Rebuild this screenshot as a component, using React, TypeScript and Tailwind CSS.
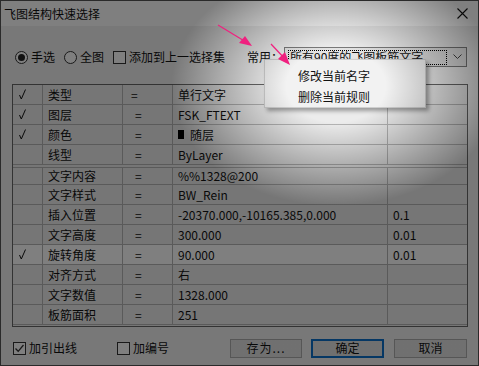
import React from "react";

interface Row {
  check: boolean;
  name: string;
  value: React.ReactNode;
  tol: string;
  active?: boolean;
  eqShift?: boolean;
}

const rows: Row[] = [
  { check: true, name: "类型", value: "单行文字", tol: "", eqShift: true },
  { check: true, name: "图层", value: "FSK_FTEXT", tol: "" },
  {
    check: true,
    name: "颜色",
    value: (
      <span className="flex items-center">
        <span className="inline-block w-[6px] h-[9px] bg-black mr-[6px]" />
        随层
      </span>
    ),
    tol: "",
  },
  { check: false, name: "线型", value: "ByLayer", tol: "" },
  { check: false, name: "文字内容", value: "%%1328@200", tol: "" },
  { check: false, name: "文字样式", value: "BW_Rein", tol: "" },
  { check: false, name: "插入位置", value: "-20370.000,-10165.385,0.000", tol: "0.1" },
  { check: false, name: "文字高度", value: "300.000", tol: "0.01" },
  { check: true, name: "旋转角度", value: "90.000", tol: "0.01", active: true },
  { check: false, name: "对齐方式", value: "右", tol: "" },
  { check: false, name: "文字数值", value: "1328.000", tol: "" },
  { check: false, name: "板筋面积", value: "251", tol: "" },
];

const Radio = ({ on }: { on: boolean }) => (
  <span className="shrink-0 w-[13px] h-[13px] rounded-full border border-[#333] bg-white flex items-center justify-center">
    {on && <span className="w-[7px] h-[7px] rounded-full bg-[#222]" />}
  </span>
);

const Check = ({ on }: { on: boolean }) => (
  <span className="shrink-0 w-[13px] h-[13px] border border-[#333] bg-white flex items-center justify-center">
    {on && (
      <svg width="11" height="11" viewBox="0 0 11 11">
        <path d="M1.5 5.5 L4.2 8.3 L9.5 2" fill="none" stroke="#333" strokeWidth="1.3" />
      </svg>
    )}
  </span>
);

const Tick = () => (
  <svg width="7" height="11" viewBox="0 0 7 11">
    <path d="M0.5 6 L2.3 10 L6.5 0.5" fill="none" stroke="#111" strokeWidth="1" />
  </svg>
);

const App: React.FC = () => {
  return (
    <div className="relative w-[479px] h-[366px] overflow-hidden whitespace-nowrap bg-[#f0f0f0] border border-[#2a2a2a] font-['Noto_Sans_CJK_SC','Microsoft_YaHei',sans-serif] text-[12px] leading-[14px] text-[#111]">
      {/* title bar */}
      <div className="h-[25px] bg-white flex items-center justify-between pl-[3px] pr-[10px]">
        <span>飞图结构快速选择</span>
        <svg width="11" height="11" viewBox="0 0 11 11">
          <path d="M0.5 0.5 L10.5 10.5 M10.5 0.5 L0.5 10.5" stroke="#111" strokeWidth="1.1" />
        </svg>
      </div>

      <div className="px-[11px]">
        {/* options row */}
        <div className="mt-[21px] h-[20px] flex items-center">
          <div className="flex items-center ml-[3px] shrink-0">
            <Radio on />
            <span className="ml-[3px]">手选</span>
          </div>
          <div className="flex items-center ml-[9px] shrink-0">
            <Radio on={false} />
            <span className="ml-[3px]">全图</span>
          </div>
          <div className="flex items-center ml-[9px] shrink-0">
            <Check on={false} />
            <span className="ml-[3px]">添加到上一选择集</span>
          </div>
          <span className="ml-[22px] shrink-0">常用：</span>
          <div className="ml-auto shrink-0 w-[183px] h-[20px] border border-[#7a7a7a] bg-[#e5e5e5] flex items-center pl-[3px] pr-[4px]">
            <div className="flex-1 h-[15px] border border-dotted border-black flex items-center pl-[1px] overflow-hidden">
              所有90度的飞图板筋文字
            </div>
            <svg className="ml-[6px]" width="9" height="6" viewBox="0 0 9 6">
              <path d="M0.5 0.5 L4.5 4.5 L8.5 0.5" fill="none" stroke="#444" strokeWidth="1" />
            </svg>
          </div>
        </div>

        {/* table */}
        <div className="mt-[17px] w-[456px] h-[243px] border border-[#666] bg-[#ececec] overflow-hidden">
          {rows.map((r, i) => (
            <div
              key={r.name}
              className={`flex h-[20px] border-b border-[#b4b4b4] ${r.active ? "bg-white" : ""} ${i === 4 ? "border-t-[2px] border-t-[#ececec] shadow-[inset_0_1px_0_#b4b4b4]" : ""}`}
            >
              <div className="w-[30px] shrink-0 border-r border-[#b4b4b4] flex items-center pl-[6px]">{r.check ? <Tick /> : null}</div>
              <div className="w-[80px] shrink-0 border-r border-[#b4b4b4] flex items-center pl-[5px]">{r.name}</div>
              <div className={`w-[50px] shrink-0 border-r border-[#b4b4b4] flex items-center ${r.eqShift ? "pl-[8px]" : "pl-[12px]"}`}>=</div>
              <div className="w-[215px] shrink-0 border-r border-[#b4b4b4] flex items-center pl-[5px]">{r.value}</div>
              <div className="flex-1 flex items-center pl-[5px]">{r.tol}</div>
            </div>
          ))}
        </div>

        {/* bottom row */}
        <div className="mt-[11px] h-[20px] flex items-center">
          <div className="flex items-center ml-[1px] shrink-0">
            <Check on />
            <span className="ml-[3px]">加引出线</span>
          </div>
          <div className="flex items-center ml-[40px] shrink-0">
            <Check on={false} />
            <span className="ml-[3px]">加编号</span>
          </div>
          <button className="ml-auto shrink-0 w-[72px] h-[19px] border border-[#adadad] bg-[#e1e1e1] flex items-center justify-center tracking-[1px]">
            存为...
          </button>
          <button className="ml-[9px] shrink-0 w-[73px] h-[19px] border-2 border-[#0a6ec8] bg-[#e1e1e1] flex items-center justify-center">
            确定
          </button>
          <button className="ml-[10px] shrink-0 w-[73px] h-[19px] border border-[#adadad] bg-[#e1e1e1] flex items-center justify-center">
            取消
          </button>
        </div>
      </div>

      {/* context menu */}
      <div className="absolute left-[263px] top-[58px] w-[162px] h-[49px] bg-[#f2f2f2] border border-[#cfcfcf] shadow-[3px_3px_4px_rgba(0,0,0,0.35)] flex flex-col pt-[6px]">
        <div className="h-[20px] flex items-center pl-[33px]">修改当前名字</div>
        <div className="h-[20px] flex items-center pl-[33px] mt-[2px]">删除当前规则</div>
      </div>

      {/* spotlight overlay */}
      <div className="absolute inset-0 pointer-events-none bg-[radial-gradient(ellipse_165px_120px_at_335px_85px,rgba(0,0,0,0)_0%,rgba(0,0,0,0)_30%,rgba(0,0,0,0.5)_100%)]" />

      {/* arrows */}
      <svg className="absolute inset-0 pointer-events-none" width="479" height="366">
        <g stroke="#f0207f" strokeWidth="1.2" fill="#f0207f">
          <line x1="217" y1="24" x2="245" y2="41" />
          <polygon points="251,45 238,42 244,35" stroke="none" />
          <line x1="270" y1="43" x2="285" y2="59" />
          <polygon points="289,64 277,58 284,51" stroke="none" />
        </g>
      </svg>
    </div>
  );
};

export default App;
